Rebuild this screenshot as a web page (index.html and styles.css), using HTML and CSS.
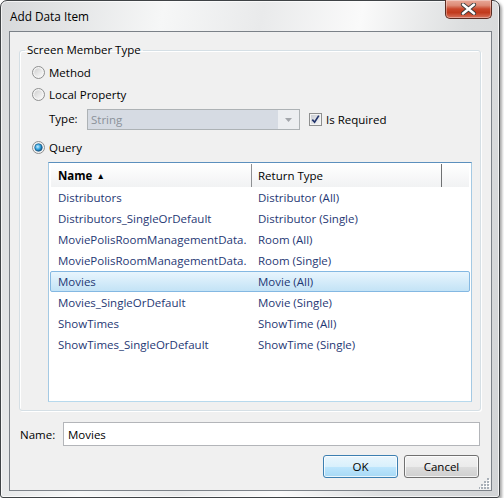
FILE: index.html
```html
<!DOCTYPE html>
<html>
<head>
<meta charset="utf-8">
<link rel="stylesheet" href="styles.css">
</head>
<body>
<div class="window">
  <div class="titlebar">
    <span class="title">Add Data Item</span>
    <div class="close">
      <svg width="17" height="12" viewBox="0 0 17 12">
        <path d="M3 1.5 L14 10.5 M14 1.5 L3 10.5" stroke="#3b3b3b" stroke-width="4.2" stroke-linecap="round" fill="none"/>
        <path d="M3 1.5 L14 10.5 M14 1.5 L3 10.5" stroke="#ffffff" stroke-width="2.4" stroke-linecap="round" fill="none"/>
      </svg>
    </div>
  </div>
  <div class="client">
    <fieldset class="group">
      <legend>Screen Member Type</legend>
      <div class="radio-row first">
        <svg class="radio" width="13" height="13" viewBox="0 0 13 13">
          <defs><linearGradient id="rg1" x1="0" y1="0" x2="1" y2="1"><stop offset="0" stop-color="#d0d0d0"/><stop offset="1" stop-color="#fbfbfb"/></linearGradient></defs>
          <circle cx="6.5" cy="6.5" r="6" fill="#f4f4f4" stroke="#8e8f8f"/>
          <circle cx="6.5" cy="6.5" r="4.3" fill="url(#rg1)"/>
        </svg>
        <span>Method</span>
      </div>
      <div class="radio-row">
        <svg class="radio" width="13" height="13" viewBox="0 0 13 13">
          <defs><linearGradient id="rg2" x1="0" y1="0" x2="1" y2="1"><stop offset="0" stop-color="#d0d0d0"/><stop offset="1" stop-color="#fbfbfb"/></linearGradient></defs>
          <circle cx="6.5" cy="6.5" r="6" fill="#f4f4f4" stroke="#8e8f8f"/>
          <circle cx="6.5" cy="6.5" r="4.3" fill="url(#rg2)"/>
        </svg>
        <span>Local Property</span>
      </div>
      <div class="type-row">
        <span class="type-label">Type:</span>
        <div class="combo">
          <span class="combo-text">String</span>
          <div class="combo-btn">
            <svg width="7" height="4" viewBox="0 0 7 4"><path d="M0 0 H7 L3.5 4 Z" fill="#a3a6ab"/></svg>
          </div>
        </div>
        <div class="check">
          <svg width="13" height="13" viewBox="0 0 13 13">
            <defs><linearGradient id="cg" x1="0" y1="0" x2="1" y2="1"><stop offset="0" stop-color="#c9ccd2"/><stop offset="1" stop-color="#f6f6f6"/></linearGradient></defs>
            <rect x="0.5" y="0.5" width="12" height="12" fill="#f4f4f4" stroke="#8e8f8f"/>
            <rect x="2" y="2" width="9" height="9" fill="url(#cg)"/>
            <path d="M3.3 6.6 L5.6 9.2 L9.8 2.6" stroke="#21336b" stroke-width="1.7" fill="none"/>
          </svg>
          <span>Is Required</span>
        </div>
      </div>
      <div class="radio-row query">
        <svg class="radio" width="13" height="13" viewBox="0 0 13 13">
          <defs><radialGradient id="qg" cx="0.4" cy="0.4" r="0.6"><stop offset="0" stop-color="#c9ecff"/><stop offset="0.55" stop-color="#35a6e0"/><stop offset="1" stop-color="#10558a"/></radialGradient></defs>
          <circle cx="6.5" cy="6.5" r="6" fill="#f4f4f4" stroke="#8e8f8f"/>
          <circle cx="6.5" cy="6.5" r="3.8" fill="url(#qg)" stroke="#1c5a86" stroke-width="0.7"/>
        </svg>
        <span>Query</span>
      </div>
      <div class="listbox">
        <div class="list-head">
          <div class="hcell h1"><b>Name</b><span class="sort">&#9650;</span></div>
          <div class="hcell h2">Return Type</div>
          <div class="hcell h3"></div>
        </div>
        <div class="row"><span class="c1">Distributors</span><span class="c2">Distributor (All)</span></div>
        <div class="row"><span class="c1">Distributors_SingleOrDefault</span><span class="c2">Distributor (Single)</span></div>
        <div class="row"><span class="c1">MoviePolisRoomManagementData.</span><span class="c2">Room (All)</span></div>
        <div class="row"><span class="c1">MoviePolisRoomManagementData.</span><span class="c2">Room (Single)</span></div>
        <div class="row selected"><span class="c1">Movies</span><span class="c2">Movie (All)</span></div>
        <div class="row"><span class="c1">Movies_SingleOrDefault</span><span class="c2">Movie (Single)</span></div>
        <div class="row"><span class="c1">ShowTimes</span><span class="c2">ShowTime (All)</span></div>
        <div class="row"><span class="c1">ShowTimes_SingleOrDefault</span><span class="c2">ShowTime (Single)</span></div>
      </div>
    </fieldset>
    <div class="name-row">
      <span class="name-label">Name:</span>
      <div class="textbox">Movies</div>
    </div>
    <div class="buttons">
      <div class="btn ok">OK</div>
      <div class="btn">Cancel</div>
    </div>
    <svg class="grip" width="11" height="11" viewBox="0 0 11 11">
      <g fill="#ffffff">
        <rect x="9" y="1" width="2" height="2"/><rect x="6" y="4" width="2" height="2"/><rect x="9" y="4" width="2" height="2"/>
        <rect x="3" y="7" width="2" height="2"/><rect x="6" y="7" width="2" height="2"/><rect x="9" y="7" width="2" height="2"/>
        <rect x="0" y="10" width="2" height="1"/>
      </g>
      <g fill="#a9b0b8">
        <rect x="8" y="0" width="2" height="2"/><rect x="5" y="3" width="2" height="2"/><rect x="8" y="3" width="2" height="2"/>
        <rect x="2" y="6" width="2" height="2"/><rect x="5" y="6" width="2" height="2"/><rect x="8" y="6" width="2" height="2"/>
        <rect x="-1" y="9" width="2" height="2"/><rect x="2" y="9" width="2" height="2"/><rect x="5" y="9" width="2" height="2"/><rect x="8" y="9" width="2" height="2"/>
      </g>
    </svg>
  </div>
</div>
</body>
</html>
```

FILE: styles.css
```css
html, body {
  margin: 0;
  padding: 0;
  background: #ffffff;
}
body {
  font-family: "Open Sans", "Noto Sans", sans-serif;
  font-size: 11.5px;
  color: #000000;
}
.window {
  box-sizing: border-box;
  width: 500px;
  height: 498px;
  border: 1px solid #3f4346;
  border-radius: 7px 7px 3px 3px;
  background: linear-gradient(100deg, #d6d8da 0%, #f6f7f7 28%, #e9eaeb 45%, #fafafa 62%, #dcdedf 80%, #d2d4d6 100%);
  box-shadow: 2px 2px 3px rgba(0,0,0,0.35), inset 0 0 0 1px rgba(255,255,255,0.7);
  display: flex;
  flex-direction: column;
}
.titlebar {
  height: 30px;
  display: flex;
  justify-content: space-between;
  align-items: flex-start;
  padding-left: 9px;
  padding-right: 7px;
}
.title {
  align-self: center;
  font-size: 11.8px;
  margin-top: -1px;
}
.close {
  box-sizing: border-box;
  width: 47px;
  height: 19px;
  margin-top: -1px;
  border: 1px solid #5b2c22;
  border-top: none;
  border-radius: 0 0 5px 5px;
  background: linear-gradient(#e9a999 0%, #dd8b76 30%, #c9462a 50%, #c13a1c 70%, #d8735c 100%);
  box-shadow: inset 0 0 0 1px rgba(255,255,255,0.35);
  display: flex;
  align-items: center;
  justify-content: center;
}
.client {
  position: relative;
  box-sizing: border-box;
  height: 460px;
  margin: 0 7px 0 8px;
  border: 1px solid #7b8188;
  background: #f0f0f0;
  display: flex;
  flex-direction: column;
}
.group {
  margin: 10px 10px 0 9px;
  padding: 0 0 8px 0;
  border: 1px solid #d5dfe5;
  border-radius: 3px;
  box-shadow: inset 1px 1px 0 #ffffff, 1px 1px 0 #ffffff;
  min-width: 0;
}
.group legend {
  margin-left: 5px;
  padding: 0 2px;
  line-height: 16px;
}
.radio-row {
  display: flex;
  align-items: center;
  height: 22px;
  margin-left: 12px;
  gap: 4px;
}
.radio-row.first {
  margin-top: 3px;
}
.radio-row.query {
  margin-top: 6px;
}
.radio {
  flex: none;
}
.type-row {
  display: flex;
  align-items: center;
  height: 21px;
  margin-top: 4px;
  margin-left: 29px;
}
.type-label {
  width: 38px;
  margin-top: -3px;
}
.combo {
  box-sizing: border-box;
  width: 213px;
  height: 21px;
  border: 1px solid #adb2b5;
  background: #d6dbe3;
  display: flex;
  align-items: center;
}
.combo-text {
  flex: 1;
  padding-left: 3px;
  color: #8b929a;
}
.combo-btn {
  width: 21px;
  height: 19px;
  background: #eceef1;
  display: flex;
  align-items: center;
  justify-content: center;
}
.check {
  display: flex;
  align-items: center;
  gap: 4px;
  margin-left: 9px;
}
.listbox {
  box-sizing: border-box;
  width: 424px;
  height: 240px;
  margin: 4px 0 0 28px;
  padding: 1px;
  border: 1px solid #a4c9e3;
  border-top-color: #5b8fbd;
  border-bottom-color: #b7d9ed;
  background: #ffffff;
}
.list-head {
  display: flex;
  height: 23px;
  margin: 0 1px;
  background: linear-gradient(#ffffff, #f1f2f3);
}
.hcell {
  box-sizing: border-box;
  height: 23px;
  display: flex;
  align-items: center;
}
.h1 {
  width: 201px;
  padding-left: 7px;
  border-right: 1px solid #8e9093;
  gap: 4px;
}
.sort {
  font-size: 8.5px;
}
.h2 {
  width: 190px;
  padding-left: 6px;
  border-right: 1px solid #6f7173;
}
.h3 {
  flex: 1;
}
.row {
  box-sizing: border-box;
  display: flex;
  align-items: center;
  height: 21px;
  border: 1px solid transparent;
  border-radius: 2px;
  color: #1f3874;
  white-space: nowrap;
}
.row.selected {
  border-color: #84b8e2;
  background: linear-gradient(#e8f5fd, #c3e3f6);
}
.c1 {
  box-sizing: border-box;
  width: 207px;
  padding-left: 7px;
  padding-right: 6px;
  overflow: hidden;
}
.name-row {
  display: flex;
  align-items: center;
  margin: 11px 11px 0 10px;
}
.name-label {
  width: 43px;
}
.textbox {
  box-sizing: border-box;
  flex: 1;
  height: 24px;
  border: 1px solid #b3b5b9;
  background: #ffffff;
  padding-left: 4px;
  display: flex;
  align-items: center;
}
.buttons {
  display: flex;
  justify-content: flex-end;
  gap: 6px;
  margin: 9px 12px 0 0;
}
.btn {
  box-sizing: border-box;
  width: 75px;
  height: 23px;
  border: 1px solid #707070;
  border-radius: 3px;
  background: linear-gradient(#f2f2f2 0%, #ebebeb 50%, #dddddd 50%, #cfcfcf 100%);
  box-shadow: inset 0 0 0 1px rgba(255,255,255,0.75);
  display: flex;
  align-items: center;
  justify-content: center;
}
.btn.ok {
  border-color: #3c7fb1;
  background: linear-gradient(#eaf6fd 0%, #d9f0fc 50%, #bee6fd 50%, #a7d9f5 100%);
}
.grip {
  position: absolute;
  right: 1px;
  bottom: 1px;
}
```
